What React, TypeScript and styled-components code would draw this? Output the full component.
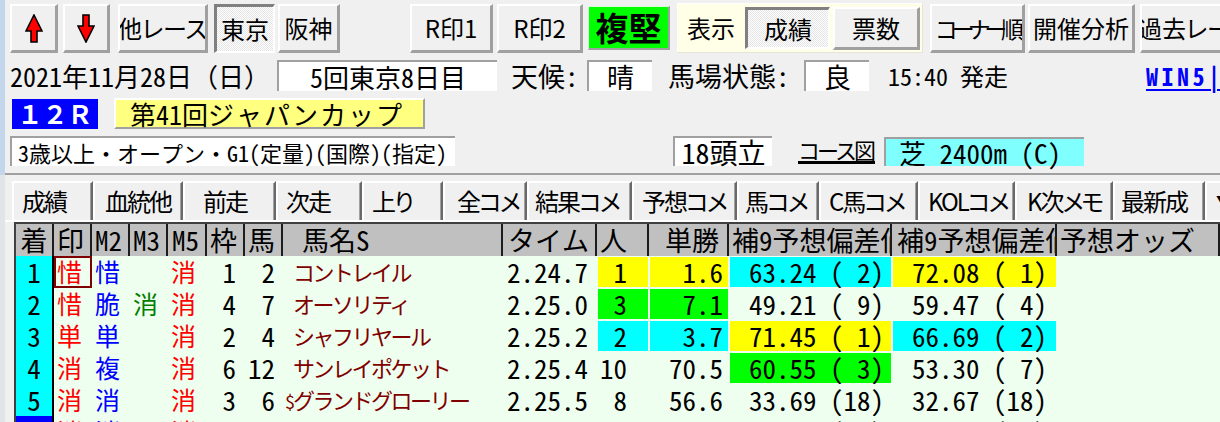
import React from "react";
import styled, { createGlobalStyle, css } from "styled-components";

const MONO = `"Noto Sans Mono CJK JP", "Noto Sans CJK JP", "DejaVu Sans Mono", monospace`;
const GOTHIC = `"Noto Sans CJK JP", "DejaVu Sans", sans-serif`;

const FACE = "#f0f0f0";
const GRID_BG = "#efffef";

const GlobalStyle = createGlobalStyle`
  html, body { margin: 0; padding: 0; background: ${FACE}; }
  body { font-family: ${GOTHIC}; color: #000; overflow: hidden; }
  * { box-sizing: border-box; }
`;

type Tone = "yellow" | "green" | "cyan";
const TONE: Record<Tone, string> = {
  yellow: "#ffff00",
  green: "#00ff00",
  cyan: "#00ffff",
};

type Result = {
  rank: number;
  mark: string;
  m2: string;
  m3: string;
  m5: string;
  waku: number;
  uma: number;
  dollar?: boolean;
  name: string;
  time: string;
  pop: number;
  odds: string;
  devA: string;
  devB: string;
  tones?: Partial<Record<"pop" | "odds" | "devA" | "devB", Tone>>;
  selected?: boolean;
};

const RESULTS: Result[] = [
  { rank: 1, mark: "惜", m2: "惜", m3: "", m5: "消", waku: 1, uma: 2, name: "コントレイル", time: "2.24.7", pop: 1, odds: "1.6", devA: "63.24 ( 2)", devB: "72.08 ( 1)", tones: { pop: "yellow", odds: "yellow", devA: "cyan", devB: "yellow" } },
  { rank: 2, mark: "惜", m2: "脆", m3: "消", m5: "消", waku: 4, uma: 7, name: "オーソリティ", time: "2.25.0", pop: 3, odds: "7.1", devA: "49.21 ( 9)", devB: "59.47 ( 4)", tones: { pop: "green", odds: "green" } },
  { rank: 3, mark: "単", m2: "単", m3: "", m5: "消", waku: 2, uma: 4, name: "シャフリヤール", time: "2.25.2", pop: 2, odds: "3.7", devA: "71.45 ( 1)", devB: "66.69 ( 2)", tones: { pop: "cyan", odds: "cyan", devA: "yellow", devB: "cyan" } },
  { rank: 4, mark: "消", m2: "複", m3: "", m5: "消", waku: 6, uma: 12, name: "サンレイポケット", time: "2.25.4", pop: 10, odds: "70.5", devA: "60.55 ( 3)", devB: "53.30 ( 7)", tones: { devA: "green" } },
  { rank: 5, mark: "消", m2: "消", m3: "", m5: "消", waku: 3, uma: 6, dollar: true, name: "グランドグローリー", time: "2.25.5", pop: 8, odds: "56.6", devA: "33.69 (18)", devB: "32.67 (18)" },
  { rank: 6, mark: "消", m2: "消", m3: "", m5: "消", waku: 8, uma: 16, name: "ユーバーレーベン", time: "2.25.6", pop: 9, odds: "58.0", devA: "42.19 (14)", devB: "45.88 (12)", selected: true },
];

const TABS: [string, number, number][] = [
  ["成績", 81, 8],
  ["血統他", 90, 10],
  ["前走", 93, 18],
  ["次走", 86, 8],
  ["上り", 81, 8],
  ["全コメ", 84, 12],
  ["結果コメ", 105, 6],
  ["予想コメ", 105, 8],
  ["馬コメ", 82, 6],
  ["C馬コメ", 99, 8],
  ["KOLコメ", 97, 8],
  ["K次メモ", 98, 10],
  ["最新成", 92, 6],
];

const HEADS: { title: string; pl: number; center?: boolean }[] = [
  { title: "着", pl: 0, center: true },
  { title: "印", pl: 3 },
  { title: "M2", pl: 3 },
  { title: "M3", pl: 3 },
  { title: "M5", pl: 4 },
  { title: "枠", pl: 3 },
  { title: "馬", pl: 3 },
  { title: "馬名S", pl: 19 },
  { title: "タイム", pl: 5 },
  { title: "人", pl: 3 },
  { title: "単勝", pl: 16 },
  { title: "補9予想偏差値", pl: 3 },
  { title: "補9予想偏差値", pl: 5 },
  { title: "予想オッズ", pl: 3 },
];

const Page = styled.div`
  width: 1220px;
  height: 422px;
  overflow: hidden;
  display: flex;
  flex-direction: column;
`;

const Header = styled.div`
  border-left: 5px solid #c4d6ec;
`;

const Toolbar = styled.div`
  display: flex;
  align-items: center;
  height: 56px;
  white-space: nowrap;
`;

interface ToolButtonProps {
  $w: number;
  $ml: number;
  $h?: number;
  $size?: number;
  $ls?: number;
  $down?: boolean;
}
const ToolButton = styled.button<ToolButtonProps>`
  flex: none;
  width: ${({ $w }) => $w}px;
  height: ${({ $h }) => $h || 49}px;
  margin-left: ${({ $ml }) => $ml}px;
  padding: 1px 0 0 0;
  display: flex;
  align-items: center;
  justify-content: center;
  font-family: ${GOTHIC};
  font-size: ${({ $size }) => $size || 24}px;
  font-feature-settings: "palt";
  letter-spacing: ${({ $ls }) => $ls || 0}px;
  line-height: 1;
  color: #000;
  background: ${FACE};
  border-style: solid;
  border-width: 2px 3px 3px 2px;
  border-color: #fff #a0a0a0 #a0a0a0 #fff;
  overflow: hidden;
  white-space: nowrap;
  ${({ $down }) =>
    $down &&
    css`
      border-width: 3px 2px 2px 3px;
      border-color: #808080 #fff #fff #808080;
      background: repeating-conic-gradient(#fff 0 25%, #e4e4e4 0 50%) 0 0 / 2px 2px;
    `}
`;

const Lamp = styled.div`
  flex: none;
  width: 82px;
  height: 44px;
  margin-left: 5px;
  display: flex;
  align-items: center;
  justify-content: center;
  background: #00ff00;
  font-family: ${GOTHIC};
  font-weight: 700;
  font-size: 33px;
  line-height: 1;
  border-style: solid;
  border-width: 1px 2px 2px 1px;
  border-color: #d8ffd8 #a0a0a0 #a0a0a0 #d8ffd8;
`;

const ViewPanel = styled.div`
  flex: none;
  display: flex;
  align-items: center;
  width: 246px;
  height: 50px;
  margin-left: 7px;
  padding-left: 9px;
  background: #ffffe8;
  border: 1px solid #fff;
  border-right-color: #e4e4d8;
  border-bottom-color: #e4e4d8;
`;

const PanelLabel = styled.span`
  flex: none;
  width: 58px;
  font-size: 24px;
  line-height: 1;
`;

const InfoPanel = styled.div`
  height: 119px;
  padding-top: 4px;
  display: flex;
  flex-direction: column;
  gap: 7px;
  border-bottom: 2px solid #a0a0a0;
`;

const InfoRow = styled.div<{ $h: number }>`
  display: flex;
  align-items: center;
  height: ${({ $h }) => $h}px;
  white-space: nowrap;
`;

interface CaptionProps {
  $w: number;
  $ml: number;
  $size: number;
}
const Caption = styled.span<CaptionProps>`
  flex: none;
  display: block;
  width: ${({ $w }) => $w}px;
  margin-left: ${({ $ml }) => $ml}px;
  font-family: ${MONO};
  font-size: ${({ $size }) => $size}px;
  line-height: 1;
`;

interface FieldProps {
  $w: number;
  $ml?: number;
  $h?: number;
  $size?: number;
  $left?: number;
  $bg?: string;
}
const Field = styled.div<FieldProps>`
  flex: none;
  width: ${({ $w }) => $w}px;
  height: ${({ $h }) => $h || 31}px;
  margin-left: ${({ $ml }) => $ml || 0}px;
  display: flex;
  align-items: center;
  justify-content: ${({ $left }) => ($left === undefined ? "center" : "flex-start")};
  padding-left: ${({ $left }) => $left || 0}px;
  background: ${({ $bg }) => $bg || "#fff"};
  border-style: solid;
  border-width: 2px 0 0 2px;
  border-color: #a0a0a0;
  font-family: ${MONO};
  font-size: ${({ $size }) => $size || 26}px;
  line-height: 1;
  white-space: pre;
`;

const Win5 = styled.span`
  flex: none;
  font-family: ${MONO};
  font-weight: 700;
  font-size: 24px;
  letter-spacing: 3.5px;
  line-height: 1;
  color: #0000ff;
  text-decoration: underline;
  text-decoration-thickness: 2px;
  text-underline-offset: 3px;
`;

const RaceNo = styled.div`
  flex: none;
  width: 86px;
  height: 30px;
  margin-left: 7px;
  display: flex;
  align-items: center;
  justify-content: center;
  background: #0000ff;
  color: #fff;
  font-family: ${GOTHIC};
  font-weight: 700;
  font-size: 25px;
  line-height: 1;
`;

const RaceTitle = styled.div`
  flex: none;
  width: 311px;
  height: 31px;
  margin-left: 16px;
  padding-left: 14px;
  display: flex;
  align-items: center;
  background: #ffff80;
  border-style: solid;
  border-width: 2px;
  border-color: #fff #a0a0a0 #a0a0a0 #fff;
  font-family: ${MONO};
  font-size: 26px;
  line-height: 1;
`;

const Kana = styled.span`
  letter-spacing: 2px;
`;

const CourseLink = styled.span`
  flex: none;
  width: 77px;
  margin-left: 26px;
  padding-bottom: 1px;
  border-bottom: 3px solid #000;
  font-family: ${GOTHIC};
  font-size: 22px;
  letter-spacing: -3px;
  line-height: 1;
`;

const Lower = styled.div`
  flex: 1;
  border-left: 5px solid #e1e4e8;
  padding-top: 6px;
  display: flex;
  flex-direction: column;
`;

const TabStrip = styled.div`
  display: flex;
  height: 41px;
  padding-left: 7px;
  border-bottom: 2px solid #fff;
  white-space: nowrap;
`;

const Tab = styled.div<{ $w: number; $pl: number }>`
  flex: none;
  width: ${({ $w }) => $w}px;
  height: 39px;
  padding-left: ${({ $pl }) => $pl}px;
  border-style: solid;
  border-width: 2px 2px 0 2px;
  border-color: #fff #696969 transparent #fff;
  box-shadow: inset -1px 0 #a0a0a0;
  font-family: ${GOTHIC};
  font-size: 24px;
  font-feature-settings: "palt";
  letter-spacing: -2px;
  line-height: 35px;
  overflow: hidden;
`;

const ScrollTab = styled(Tab)`
  font-size: 13px;
  letter-spacing: 0;
  line-height: 33px;
`;

const Grid = styled.div`
  margin-left: 9px;
  width: 1206px;
  display: grid;
  grid-template-columns: 38px 38px 38px 38px 39px 38px 38px 220px 94px 52px 80px 163px 165px 163px;
  grid-auto-rows: 32px;
  border-top: 2px solid #404040;
  border-left: 2px solid #404040;
  background: ${GRID_BG};
`;

const HeadCell = styled.div<{ $pl: number; $center?: boolean }>`
  background: #c0c0c0;
  border-right: 2px solid #1c1c1c;
  padding-left: ${({ $pl }) => $pl}px;
  text-align: ${({ $center }) => ($center ? "center" : "left")};
  font-family: ${MONO};
  font-size: 27px;
  line-height: 31px;
  white-space: nowrap;
  overflow: hidden;
`;

const RankCell = styled.div<{ $selected?: boolean }>`
  background: ${({ $selected }) => ($selected ? "#0000ff" : "#00ffff")};
  color: ${({ $selected }) => ($selected ? "#fff" : "#000")};
  border-right: 2px solid #000;
  text-align: center;
  font-family: ${MONO};
  font-size: 27px;
  line-height: 32px;
`;

const MarkCell = styled.div<{ $color: string; $focus?: boolean }>`
  padding-left: 3px;
  color: ${({ $color }) => $color};
  font-family: ${GOTHIC};
  font-size: 25px;
  line-height: 31px;
  ${({ $focus }) =>
    $focus &&
    css`
      box-shadow: inset 0 0 0 2px #800000;
    `}
`;

const NumCell = styled.div<{ $pr: number; $bg?: string }>`
  padding-right: ${({ $pr }) => $pr}px;
  text-align: right;
  font-family: ${MONO};
  font-size: 27px;
  line-height: 32px;
  white-space: pre;
  overflow: hidden;
  ${({ $bg }) =>
    $bg &&
    css`
      background: ${$bg};
      box-shadow: inset 0 0 0 1px ${GRID_BG};
    `}
`;

const NameCell = styled.div`
  padding-left: 2px;
  color: #800000;
  font-family: ${GOTHIC};
  font-size: 22px;
  letter-spacing: -2.5px;
  line-height: 31px;
  white-space: nowrap;
  overflow: hidden;
`;

const Prefix = styled.span`
  display: inline-block;
  width: 8px;
  font-size: 18px;
  letter-spacing: 0;
`;

const BlankCell = styled.div``;

const Arrow = ({ dir }: { dir: "up" | "down" }) => (
  <svg width="18" height="29" viewBox="0 0 18 29">
    <polygon
      points={
        dir === "up"
          ? "9,1 17,17 12,17 12,28 6,28 6,17 1,17"
          : "6,1 12,1 12,12 17,12 9,28 1,12 6,12"
      }
      fill="#ff0000"
      stroke="#000"
      strokeWidth="1.6"
      strokeLinejoin="miter"
    />
  </svg>
);

const tone = (t?: Tone) => (t ? TONE[t] : undefined);

export default function App() {
  return (
    <>
      <GlobalStyle />
      <Page>
        <Header>
          <Toolbar>
            <ToolButton $w={48} $ml={5}>
              <Arrow dir="up" />
            </ToolButton>
            <ToolButton $w={47} $ml={5}>
              <Arrow dir="down" />
            </ToolButton>
            <ToolButton $w={90} $ml={8}>他レース</ToolButton>
            <ToolButton $w={61} $ml={6} $down>
              東京
            </ToolButton>
            <ToolButton $w={62} $ml={3}>阪神</ToolButton>
            <ToolButton $w={83} $ml={70}>R印1</ToolButton>
            <ToolButton $w={86} $ml={4}>R印2</ToolButton>
            <Lamp>複堅</Lamp>
            <ViewPanel>
              <PanelLabel>表示</PanelLabel>
              <ToolButton $w={85} $ml={0} $h={42} $down>
                成績
              </ToolButton>
              <ToolButton $w={87} $ml={3} $h={43}>
                票数
              </ToolButton>
            </ViewPanel>
            <ToolButton $w={95} $ml={7} $size={23} $ls={-6}>コーナー順</ToolButton>
            <ToolButton $w={107} $ml={3}>開催分析</ToolButton>
            <ToolButton $w={110} $ml={5}>過去レース</ToolButton>
          </Toolbar>

          <InfoPanel>
            <InfoRow $h={31}>
              <Caption $w={267} $ml={5} $size={26}>2021年11月28日（日）</Caption>
              <Field $w={220}>5回東京8日目</Field>
              <Caption $w={76} $ml={14} $size={27}>天候:</Caption>
              <Field $w={65} $size={27}>晴</Field>
              <Caption $w={136} $ml={16} $size={27}>馬場状態:</Caption>
              <Field $w={65} $size={27}>良</Field>
              <Caption $w={258} $ml={19} $size={24}>15:40 発走</Caption>
              <Win5>WIN5|</Win5>
            </InfoRow>
            <InfoRow $h={31}>
              <RaceNo>１２Ｒ</RaceNo>
              <RaceTitle>
                第41回<Kana>ジャパンカップ</Kana>
              </RaceTitle>
            </InfoRow>
            <InfoRow $h={30}>
              <Field $w={445} $ml={5} $h={30} $size={22} $left={6}>
                3歳以上・オープン・G1(定量)(国際)(指定)
              </Field>
              <Field $w={99} $ml={218} $h={30} $size={28}>18頭立</Field>
              <CourseLink>コース図</CourseLink>
              <Field $w={200} $ml={9} $h={29} $size={27} $left={13} $bg="#80ffff">
                芝 2400m (C)
              </Field>
            </InfoRow>
          </InfoPanel>
        </Header>

        <Lower>
          <TabStrip>
            {TABS.map(([label, w, pl]) => (
              <Tab key={label} $w={w} $pl={pl}>
                {label}
              </Tab>
            ))}
            <ScrollTab $w={60} $pl={9}>▼</ScrollTab>
          </TabStrip>

          <Grid>
            {HEADS.map((h, i) => (
              <HeadCell key={i} $pl={h.pl} $center={h.center}>
                {h.title}
              </HeadCell>
            ))}
            {RESULTS.map((r, i) => (
              <React.Fragment key={r.rank}>
                <RankCell $selected={r.selected}>{r.rank}</RankCell>
                <MarkCell $color="#ff0000" $focus={i === 0}>{r.mark}</MarkCell>
                <MarkCell $color="#0000ff">{r.m2}</MarkCell>
                <MarkCell $color="#008000">{r.m3}</MarkCell>
                <MarkCell $color="#ff0000">{r.m5}</MarkCell>
                <NumCell $pr={9}>{r.waku}</NumCell>
                <NumCell $pr={8}>{r.uma}</NumCell>
                <NameCell>
                  <Prefix>{r.dollar ? "$" : ""}</Prefix>
                  {r.name}
                </NameCell>
                <NumCell $pr={9}>{r.time}</NumCell>
                <NumCell $pr={22} $bg={tone(r.tones?.pop)}>{r.pop}</NumCell>
                <NumCell $pr={6} $bg={tone(r.tones?.odds)}>{r.odds}</NumCell>
                <NumCell $pr={8} $bg={tone(r.tones?.devA)}>{r.devA}</NumCell>
                <NumCell $pr={10} $bg={tone(r.tones?.devB)}>{r.devB}</NumCell>
                <BlankCell />
              </React.Fragment>
            ))}
          </Grid>
        </Lower>
      </Page>
    </>
  );
}
